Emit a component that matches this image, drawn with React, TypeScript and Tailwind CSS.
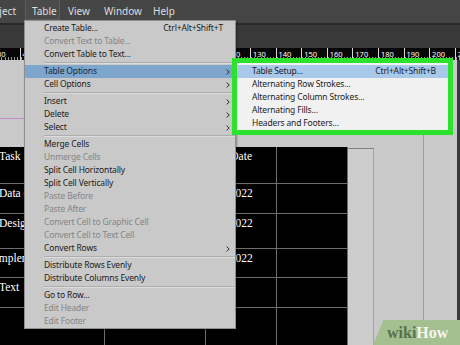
type Item = {
  label: string;
  disabled?: boolean;
  shortcut?: string;
  sub?: boolean;
  active?: boolean;
};

const SEP = "sep" as const;

const tableMenu: (Item | typeof SEP)[] = [
  { label: "Create Table...", shortcut: "Ctrl+Alt+Shift+T" },
  { label: "Convert Text to Table...", disabled: true },
  { label: "Convert Table to Text..." },
  SEP,
  { label: "Table Options", sub: true, active: true },
  { label: "Cell Options", sub: true },
  SEP,
  { label: "Insert", sub: true },
  { label: "Delete", sub: true },
  { label: "Select", sub: true },
  SEP,
  { label: "Merge Cells" },
  { label: "Unmerge Cells", disabled: true },
  { label: "Split Cell Horizontally" },
  { label: "Split Cell Vertically" },
  { label: "Paste Before", disabled: true },
  { label: "Paste After", disabled: true },
  { label: "Convert Cell to Graphic Cell", disabled: true },
  { label: "Convert Cell to Text Cell", disabled: true },
  { label: "Convert Rows", sub: true },
  SEP,
  { label: "Distribute Rows Evenly" },
  { label: "Distribute Columns Evenly" },
  SEP,
  { label: "Go to Row..." },
  { label: "Edit Header", disabled: true },
  { label: "Edit Footer", disabled: true },
];

const tableOptions = [
  { label: "Table Setup...", shortcut: "Ctrl+Alt+Shift+B", active: true },
  { label: "Alternating Row Strokes..." },
  { label: "Alternating Column Strokes..." },
  { label: "Alternating Fills..." },
  { label: "Headers and Footers..." },
];

const rulerMarks = [30, 40, 50, 60, 70, 80, 90, 100, 110, 120, 130, 140, 150, 160, 170, 180, 190, 200, 210];

const rows = [
  ["Task", "", "Date", ""],
  ["Data collection", "", "5/02/2022", ""],
  ["Design", "", "5/09/2022", ""],
  ["Implementation", "", "5/16/2022", ""],
  ["Text", "", "", ""],
  ["", "", "", ""],
];

function Chevron() {
  return (
    <svg width="4" height="6" viewBox="0 0 4 6" className="shrink-0">
      <path d="M0.6 0.6 L3.2 3 L0.6 5.4" fill="none" stroke="#1e1e1e" strokeWidth="0.9" />
    </svg>
  );
}

export default function App() {
  return (
    <div className="relative w-[460px] h-[345px] overflow-hidden flex flex-col bg-[#c9c9c9] font-['Noto_Sans',sans-serif]">
      {/* Menu bar */}
      <div className="h-[23px] shrink-0 bg-[#454545] flex items-start text-[10px] text-[#dedede]">
        <span className="-ml-[18px] w-[34px] text-right leading-[23px]">Object</span>
        <span className="ml-[9px] w-[35px] h-[20px] pl-[6px] leading-[22px] bg-[#4b4b4b] border border-t-0 border-[#5d5d5d]">
          Table
        </span>
        <span className="ml-[8px] w-[36px] leading-[23px]">View</span>
        <span className="w-[49px] leading-[23px]">Window</span>
        <span className="leading-[23px]">Help</span>
      </div>
      <div className="h-[2px] shrink-0 bg-[#2a2a2a]" />
      {/* Toolbar strip */}
      <div className="h-[23px] shrink-0 bg-[#393939]" />

      {/* Ruler */}
      <div className="h-[12px] shrink-0 bg-[#070707] flex overflow-hidden">
        <div className="-ml-[6px] flex">
          {rulerMarks.map((n) => (
            <div key={n} className="relative w-[25.6px] shrink-0 h-full border-l border-[#d8d8d8]">
              <span className="block pl-[2px] pt-px text-[7.5px] leading-[10px] text-white">{n}</span>
              <div className="absolute left-0 right-0 bottom-0 h-[3px] bg-[repeating-linear-gradient(90deg,#9a9a9a_0_1px,transparent_1px_3.2px)]" />
            </div>
          ))}
        </div>
      </div>

      {/* Document area */}
      <div className="flex-1 flex min-h-0">
        <div className="w-[374px] shrink-0 flex flex-col">
          <div className="mt-[58px] h-px w-[348px] bg-[#c88ac6]" />
          <div className="mt-[28px] flex-1 flex">
            <div className="-ml-[8px] w-[356px] grid grid-cols-[112px_100px_70px_70px] grid-rows-[36px_29px_34px_28px_29px_1fr] gap-px bg-[#6e6e6e] font-['Liberation_Serif',serif] text-[11.5px] leading-[14px] text-white">
              {rows.map((r, i) =>
                r.map((c, j) => (
                  <div
                    key={`${i}-${j}`}
                    className={`bg-black overflow-hidden whitespace-nowrap pt-[2px] ${
                      j === 0 ? "pl-[7px]" : j === 2 ? "text-right pr-[24px]" : ""
                    }`}
                  >
                    <span className={i === 3 && j === 0 ? "-ml-[4px]" : ""}>{c}</span>
                  </div>
                ))
              )}
            </div>
            <div className="w-[26px] mt-px bg-[#cdcdcd] border-t border-r border-t-[#808080] border-r-[#9ba2ba]" />
          </div>
        </div>
        <div className="w-[49px] shrink-0" />
        <div className="w-px shrink-0 bg-[#a98ccc]" />
        <div className="flex-1" />
        <div className="w-[3px] shrink-0 bg-[#3a3a3a]" />
      </div>

      {/* Table dropdown */}
      <div className="absolute left-[24px] top-[20px] w-[212px] h-[309px] bg-[#c9c9c9] border border-[#8f8f8f] shadow-[1px_1px_2px_rgba(0,0,0,0.35)] pt-[1px] text-[8.5px] tracking-[-0.15px]">
        {tableMenu.map((it, i) =>
          it === SEP ? (
            <div key={i} className="h-[4px] ml-[19px] pt-[1px]">
              <div className="h-px bg-[#adadad]" />
              <div className="h-px bg-[#dcdcdc]" />
            </div>
          ) : (
            <div
              key={i}
              className={`h-[13px] flex items-center pl-[19px] pr-[5px] ${
                it.active ? "bg-[#7ea6cd] text-[#14263c]" : it.disabled ? "text-[#858585]" : "text-[#1b1b1b]"
              }`}
            >
              <span className="flex-1 whitespace-nowrap">{it.label}</span>
              {it.shortcut && <span className="mr-[7px] whitespace-nowrap">{it.shortcut}</span>}
              {it.sub && <Chevron />}
            </div>
          )
        )}
      </div>

      {/* Table Options submenu, outlined */}
      <div className="absolute left-[232px] top-[58px] w-[221px] h-[77px] border-[5px] border-[#2de22d] bg-[#f1f1f1] pt-[2px] text-[8.5px] tracking-[-0.15px] text-[#1c1c1c]">
        {tableOptions.map((it) => (
          <div
            key={it.label}
            className={`h-[13px] flex items-center pl-[15px] pr-[12px] ${it.active ? "bg-[#a8c9ea]" : ""}`}
          >
            <span className="flex-1 whitespace-nowrap">{it.label}</span>
            {it.shortcut && <span className="whitespace-nowrap">{it.shortcut}</span>}
          </div>
        ))}
      </div>

      {/* wikiHow mark */}
      <div className="absolute right-0 bottom-0 w-[87px] h-[25px] bg-[#a4bf90] [clip-path:polygon(12%_0,100%_0,100%_100%,0_100%)] pl-[14px] pt-[3px] font-['Liberation_Serif',serif] font-bold text-[16px] leading-[20px]">
        <span className="text-[#56724b]">wiki</span>
        <span className="text-[#f3f6ef]">How</span>
      </div>
    </div>
  );
}
